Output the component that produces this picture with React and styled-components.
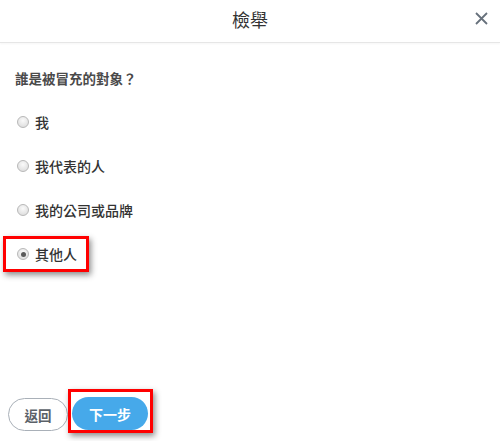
import React from "react";
import styled, { createGlobalStyle } from "styled-components";

const GlobalStyle = createGlobalStyle`
  html, body {
    margin: 0;
    padding: 0;
    background: #fff;
  }
  body {
    font-family: "Noto Sans CJK TC", "Noto Sans", sans-serif;
  }
`;

const options = [
  { id: "me", label: "我" },
  { id: "rep", label: "我代表的人" },
  { id: "brand", label: "我的公司或品牌" },
  { id: "other", label: "其他人", checked: true, marked: true },
];

const App = () => {
  return (
    <Modal>
      <GlobalStyle />
      <Header>
        <Title>檢舉</Title>
        <Close aria-label="close">
          <svg width="13" height="13" viewBox="0 0 13 13">
            <path d="M1 1L12 12M12 1L1 12" stroke="#67717c" strokeWidth="1.8" />
          </svg>
        </Close>
      </Header>
      <Body>
        <Question>誰是被冒充的對象？</Question>
        <OptionList>
          {options.map((o) => (
            <Option key={o.id} $marked={o.marked}>
              <Radio $checked={o.checked} />
              <span>{o.label}</span>
            </Option>
          ))}
        </OptionList>
      </Body>
      <Footer>
        <BackButton>返回</BackButton>
        <Marker>
          <NextButton>下一步</NextButton>
        </Marker>
      </Footer>
    </Modal>
  );
};

const Modal = styled.div`
  width: 500px;
  height: 441px;
  display: flex;
  flex-direction: column;
  background: #fff;
  overflow: hidden;
`;

const Header = styled.div`
  position: relative;
  height: 42px;
  display: flex;
  align-items: center;
  justify-content: center;
  border-bottom: 1px solid #e6e6e6;
  box-shadow: 0 1px 2px rgba(0, 0, 0, 0.04);
`;

const Title = styled.h2`
  margin: 0;
  font-size: 18px;
  font-weight: 400;
  color: #333;
  line-height: 1;
  margin-top: -4px;
`;

const Close = styled.button`
  position: absolute;
  right: 11px;
  top: 9px;
  width: 16px;
  height: 18px;
  padding: 0;
  border: 0;
  background: none;
  display: flex;
  align-items: center;
  justify-content: center;
`;

const Body = styled.div`
  flex: 1;
  padding: 26px 15px 0;
`;

const Question = styled.div`
  font-size: 13.5px;
  font-weight: 700;
  color: #4a4a4a;
  line-height: 18px;
  margin-bottom: 17px;
`;

const OptionList = styled.div`
  display: flex;
  flex-direction: column;
  align-items: flex-start;
  gap: 8px;
  margin-left: -12px;
`;

const Option = styled.label`
  box-sizing: border-box;
  height: 36px;
  display: inline-flex;
  align-items: center;
  gap: 6px;
  padding: 0 9px 0 11px;
  border: 3px solid ${(p) => (p.$marked ? "#ff0000" : "transparent")};
  box-shadow: ${(p) => (p.$marked ? "2px 3px 6px rgba(0,0,0,0.45)" : "none")};
  font-size: 14px;
  font-weight: 500;
  color: #333;
`;

const Radio = styled.span`
  box-sizing: border-box;
  width: 12px;
  height: 12px;
  border-radius: 50%;
  border: 1px solid #b8b8b8;
  background: radial-gradient(circle at 50% 35%, #fafafa, #d8d8d8);
  display: flex;
  align-items: center;
  justify-content: center;
  &::after {
    content: "";
    width: 5px;
    height: 5px;
    border-radius: 50%;
    background: ${(p) => (p.$checked ? "#5a5a5a" : "transparent")};
  }
`;

const Footer = styled.div`
  display: flex;
  align-items: flex-end;
  padding: 0 0 8px 8px;
`;

const BackButton = styled.button`
  box-sizing: border-box;
  width: 60px;
  height: 33px;
  margin-bottom: 2px;
  border: 1px solid #a9b0b8;
  border-radius: 17px;
  background: #fff;
  font-family: inherit;
  font-size: 13.5px;
  font-weight: 700;
  color: #5b6168;
`;

const Marker = styled.div`
  display: flex;
  padding: 5px 2px 0 1px;
  border: 3px solid #ff0000;
  box-shadow: 2px 3px 6px rgba(0, 0, 0, 0.45);
`;

const NextButton = styled.button`
  box-sizing: border-box;
  width: 76px;
  height: 33px;
  border: 0;
  border-radius: 17px;
  background: #46a9ea;
  font-family: inherit;
  font-size: 14px;
  font-weight: 700;
  color: #fff;
`;

export default App;
